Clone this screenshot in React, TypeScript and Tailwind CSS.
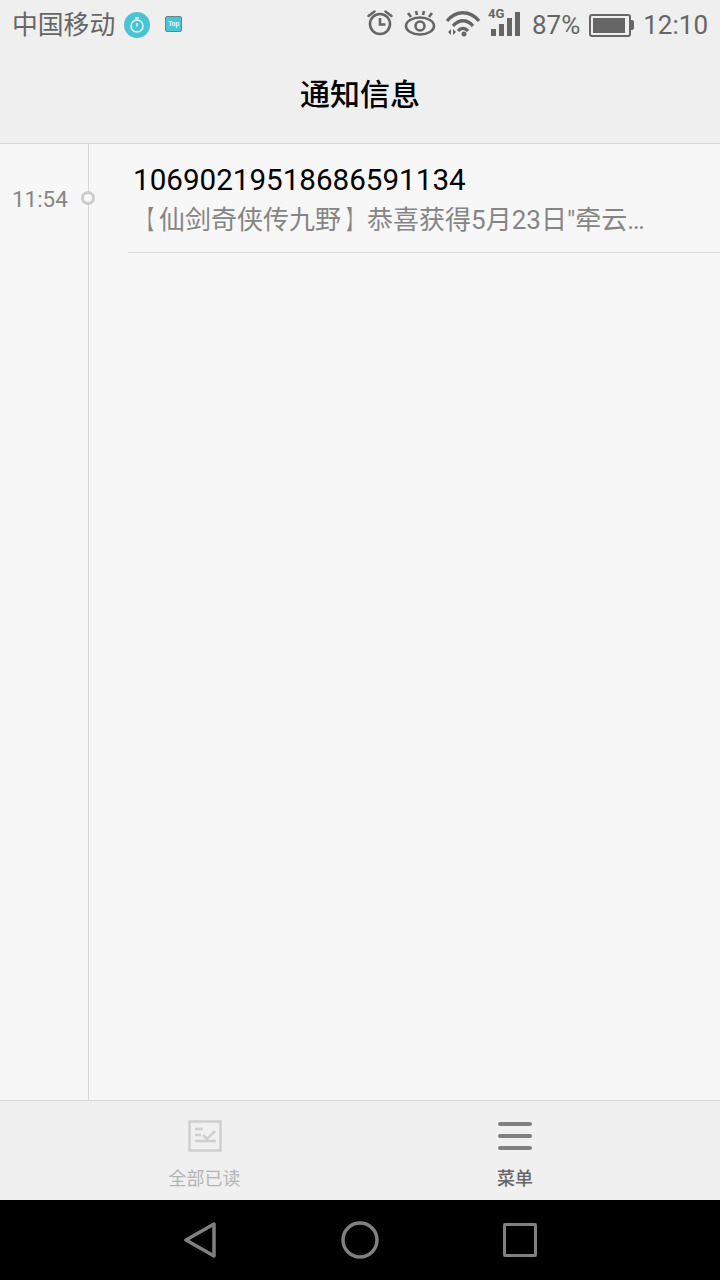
const sans = "font-['Roboto','Noto_Sans_CJK_SC',sans-serif]";

const StatusBar = () => (
  <div className="flex h-[50px] items-center justify-between bg-[#efefef] pl-[12px] pr-[12px] text-[#666666]">
    <div className="flex items-center">
      <span className="text-[25.8px] leading-[50px]">中国移动</span>
      <svg width="26" height="26" viewBox="0 0 26 26" className="ml-[9px]">
        <circle cx="13" cy="13" r="13" fill="#4ac4d2" />
        <circle cx="13" cy="14" r="6" fill="none" stroke="#e4f7f9" strokeWidth="1.5" />
        <path d="M11 6h4M13 11v3.5" stroke="#e4f7f9" strokeWidth="1.5" />
      </svg>
      <div className="mb-[2px] ml-[15px] flex h-[16px] w-[17px] items-center justify-center rounded-[2px] border border-[#66848a] bg-[#4ac4d2]">
        <span className="text-[7px] font-bold leading-none text-[#e4f7f9]">Top</span>
      </div>
    </div>
    <div className="flex items-center">
      <svg width="28" height="50" viewBox="0 0 28 50" fill="none" stroke="#666" strokeWidth="2.6">
        <circle cx="14" cy="24" r="10" />
        <path d="M14 18v6.500h5.500" />
        <path d="M2.500 16l6-4.500M25.500 16l-6-4.500" strokeLinecap="round" />
      </svg>
      <svg width="32" height="50" viewBox="0 0 32 50" fill="none" stroke="#666" strokeWidth="2.6" className="ml-[10px]">
        <ellipse cx="16" cy="26" rx="14" ry="8.500" />
        <circle cx="16" cy="26" r="4.500" />
        <path d="M7 17l-3-4M13 15l-1-4M19 15l1-4M25 17l3-4" />
      </svg>
      <svg width="36" height="50" viewBox="0 0 36 50" fill="none" stroke="#666" strokeWidth="3.4" className="ml-[9px]">
        <path d="M2 21C11 10 25 10 34 21M8 26c6-7 14-7 20 0M13 31c3-3.500 7-3.500 10 0" />
        <circle cx="19" cy="34" r="2.500" fill="#666" stroke="none" />
        <path d="M3 32l3-3v6zM11 32l-3-3v6z" fill="#666" stroke="none" />
      </svg>
      <svg width="34" height="50" viewBox="0 0 34 50" className="ml-[6px]">
        <text x="1" y="18" fontSize="13" fontWeight="700" fill="#666" fontFamily="Roboto">4G</text>
        <rect x="4" y="29" width="5" height="7" fill="#666" />
        <rect x="12" y="24" width="5" height="12" fill="#666" />
        <rect x="20" y="18" width="5" height="18" fill="#666" />
        <rect x="28" y="12" width="5" height="24" fill="#666" />
      </svg>
      <span className="ml-[11px] text-[26px] leading-[50px]">87%</span>
      <div className="ml-[9px] flex items-center">
        <div className="flex h-[23px] w-[42px] items-center rounded-[3px] border-2 border-[#666666] p-[2px]">
          <div className="h-full w-[32px] bg-[#666666]" />
        </div>
        <div className="h-[10px] w-[3px] rounded-r-[2px] bg-[#666666]" />
      </div>
      <span className="ml-[9px] text-[26px] leading-[50px]">12:10</span>
    </div>
  </div>
);

const App = () => (
  <div className={`flex h-[1280px] w-[720px] flex-col overflow-hidden bg-[#f7f7f7] ${sans}`}>
    <StatusBar />
    <header className="flex h-[94px] items-center justify-center border-b border-[#d6d6d6] bg-[#efefef] pb-[4px]">
      <h1 className="text-[30px] font-medium text-black">通知信息</h1>
    </header>

    <main className="flex flex-1">
      <div className="relative w-[89px] shrink-0 border-r border-[#d8d8d8]">
        <span className="absolute left-[12px] top-[41px] text-[22.4px] leading-[28px] text-[#858585]">11:54</span>
        <span className="absolute left-[81px] top-[47px] h-[14px] w-[14px] rounded-full border-[3px] border-[#cccccc] bg-[#f7f7f7]" />
      </div>
      <div className="flex-1 pl-[39px]">
        <div className="h-[109px] border-b border-[#dcdcdc] pl-[5px] pt-[17px]">
          <p className="text-[29.6px] leading-[38px] text-black">10690219518686591134</p>
          <p className="mt-[3px] text-[26px] leading-[36px] text-[#858585]">
            <span className="inline-block scale-x-[0.6]">【</span>仙剑奇侠传九野<span className="inline-block scale-x-[0.6]">】</span>恭喜获得5月23日"牵云…
          </p>
        </div>
      </div>
    </main>

    <footer className="flex h-[100px] border-t border-[#d6d6d6] bg-[#f0f0f0]">
      <div className="flex w-[409px] flex-col items-center pt-[19px]">
        <svg width="34" height="32" viewBox="0 0 34 32" fill="none" stroke="#cfcfcf" strokeWidth="2.500">
          <rect x="1.500" y="1.500" width="31" height="29" />
          <path d="M7 9h8M7 15h6M7 21h21M15 15l4 4 8-8" />
        </svg>
        <span className="mt-[14px] text-[18px] leading-[26px] text-[#b4b4b4]">全部已读</span>
      </div>
      <div className="flex w-[212px] flex-col items-center pt-[19px]">
        <div className="flex h-[32px] w-[34px] flex-col justify-between py-[2px]">
          <div className="h-[4px] rounded-full bg-[#808080]" />
          <div className="h-[4px] rounded-full bg-[#808080]" />
          <div className="h-[4px] rounded-full bg-[#808080]" />
        </div>
        <span className="mt-[14px] text-[18px] font-medium leading-[26px] text-[#666666]">菜单</span>
      </div>
    </footer>

    <nav className="flex h-[80px] items-center bg-black pl-[184px]">
      <svg width="32" height="36" viewBox="0 0 32 36" fill="none" stroke="#808080" strokeWidth="3.500" strokeLinejoin="round">
        <path d="M30 2v32L2 18z" />
      </svg>
      <svg width="38" height="38" viewBox="0 0 38 38" fill="none" stroke="#808080" strokeWidth="3.500" className="ml-[125px]">
        <circle cx="19" cy="19" r="17" />
      </svg>
      <div className="ml-[124px] h-[34px] w-[34px] rounded-[2px] border-[3.5px] border-[#808080]" />
    </nav>
  </div>
);

export default App;
